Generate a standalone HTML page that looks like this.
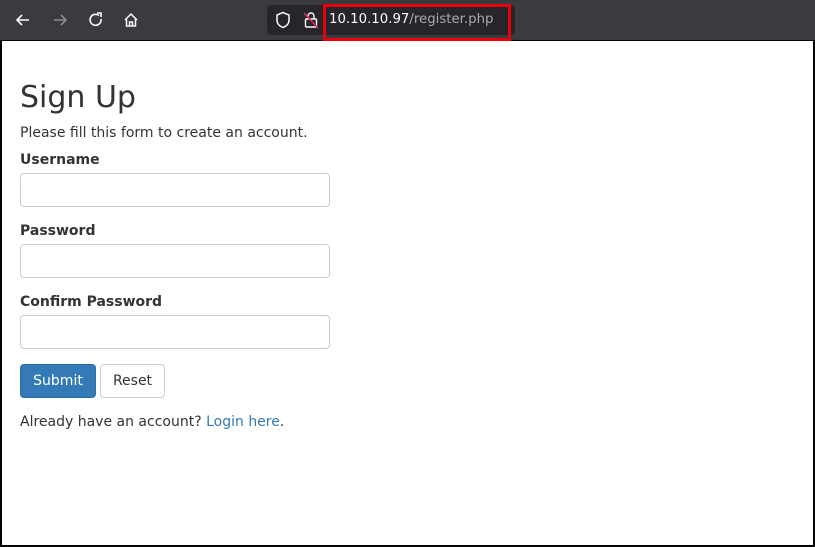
<!DOCTYPE html>
<html><head><style>
*{box-sizing:border-box;margin:0;padding:0}
body{width:815px;height:547px;overflow:hidden;background:#000;font-family:"DejaVu Sans","Liberation Sans",sans-serif;position:relative}
#bar{position:absolute;left:0;top:0;width:815px;height:40px;background:#3b3a41}
#url{position:absolute;left:267px;top:5px;width:248px;height:30px;background:#26252b;border-radius:4px}
#red{position:absolute;left:323px;top:4px;width:188px;height:37px;border:3px solid #e8000b}
#urltext{position:absolute;left:329px;top:12px;font-size:13.3px;color:#fbfbfe}
#urltext span{color:#a9a9ae}
#page{position:absolute;left:2px;top:41px;width:811px;height:504px;background:#fff;color:#333;font-size:14px}
h1{position:absolute;left:18px;top:39px;font-size:30px;font-weight:400;color:#333}
.t{position:absolute;left:18px;white-space:nowrap}
.l{font-weight:bold}
.in{position:absolute;left:18px;width:310px;height:34px;border:1px solid #ccc;border-radius:4px}
.btn{position:absolute;top:323px;height:34px;border-radius:4px;font-size:14px;text-align:center;line-height:33px}
a{color:#337ab7;text-decoration:none}
svg{position:absolute}
</style></head><body>
<div id="bar">
<svg style="left:14px;top:11px" width="18" height="18" viewBox="0 0 18 18"><path d="M15 9H3M8 4L3 9l5 5" stroke="#fbfbfe" stroke-width="1.6" fill="none"/></svg>
<svg style="left:51px;top:11px" width="18" height="18" viewBox="0 0 18 18"><path d="M3 9h12M10 4l5 5-5 5" stroke="#8a8a90" stroke-width="1.6" fill="none"/></svg>
<svg style="left:87px;top:11px" width="18" height="18" viewBox="0 0 18 18"><path d="M14 8A5.5 5.5 0 1 1 12 4.5" stroke="#fbfbfe" stroke-width="1.6" fill="none"/><path d="M10 2h4v4" stroke="#fbfbfe" stroke-width="1.6" fill="none"/></svg>
<svg style="left:122px;top:11px" width="18" height="18" viewBox="0 0 18 18"><path d="M3 9L9 3l6 6M4.5 8v7h9V8M7.5 15v-4h3v4" stroke="#fbfbfe" stroke-width="1.5" fill="none"/></svg>
</div>
<div id="url"></div>
<svg style="left:275px;top:11px" width="16" height="18" viewBox="0 0 16 18"><path d="M8 1.5L2 4v5c0 4 3 6.5 6 7.5 3-1 6-3.5 6-7.5V4z" stroke="#fbfbfe" stroke-width="1.5" fill="none"/></svg>
<svg style="left:303px;top:11px" width="16" height="18" viewBox="0 0 16 18"><rect x="2.5" y="8" width="11" height="8" rx="1" stroke="#fbfbfe" stroke-width="1.4" fill="none"/><path d="M5 8V5a3 3 0 0 1 6 0v3" stroke="#fbfbfe" stroke-width="1.4" fill="none"/><path d="M1 2l14 15" stroke="#e22850" stroke-width="1.6"/></svg>
<div id="red"></div>
<div id="urltext">10.10.10.97<span>/register.php</span></div>
<div id="page">
<h1>Sign Up</h1>
<div class="t" style="top:84px">Please fill this form to create an account.</div>
<div class="t l" style="top:111px">Username</div>
<div class="in" style="top:132px"></div>
<div class="t l" style="top:182px">Password</div>
<div class="in" style="top:203px"></div>
<div class="t l" style="top:253px">Confirm Password</div>
<div class="in" style="top:274px"></div>
<div class="btn" style="left:18px;width:76px;background:#337ab7;border:1px solid #2e6da4;color:#fff">Submit</div>
<div class="btn" style="left:98px;width:65px;background:#fff;border:1px solid #ccc;color:#333">Reset</div>
<div class="t" style="top:373px">Already have an account? <a>Login here</a>.</div>
</div>
</body></html>
